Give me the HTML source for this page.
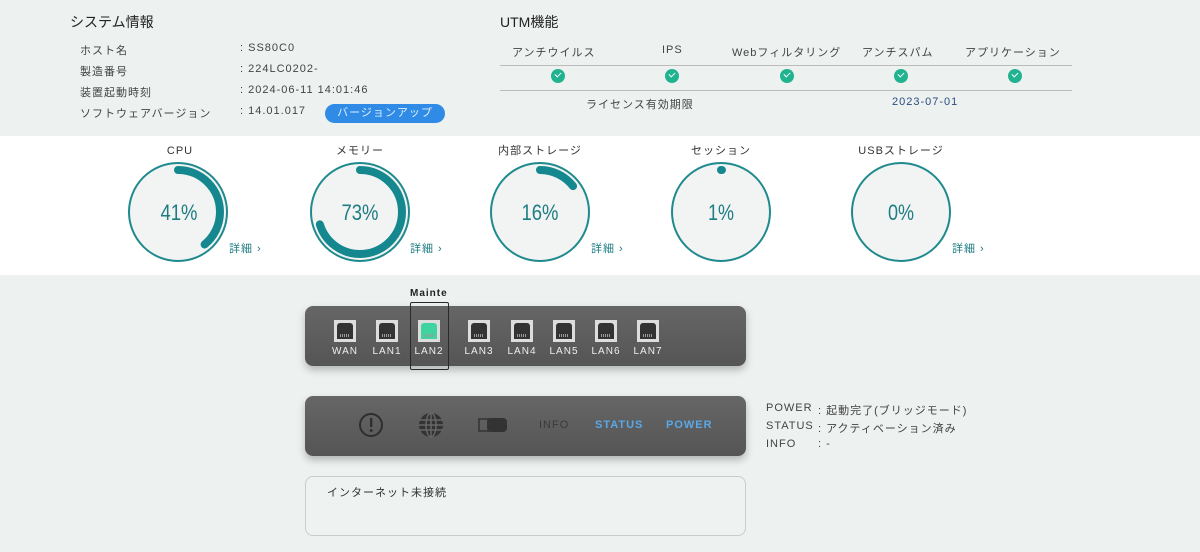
<!DOCTYPE html>
<html><head><meta charset="utf-8"><style>
*{margin:0;padding:0;box-sizing:border-box}
body{width:1200px;height:552px;background:#edf1f0;font-family:"Liberation Sans","Noto Sans CJK JP",sans-serif;color:#333;position:relative;overflow:hidden}
.a{position:absolute;white-space:nowrap}
.t{font-size:14px;color:#222}
.s{font-size:11px;color:#444;letter-spacing:1px}
.band{position:absolute;left:0;top:136px;width:1200px;height:139px;background:#fff}
.hr{position:absolute;height:1px;background:#bbb}
.ck{position:absolute;width:14px;height:14px;border-radius:50%;background:#21b28f}
.ck:after{content:"";position:absolute;left:4px;top:3px;width:5px;height:3px;border-left:1.5px solid #fff;border-bottom:1.5px solid #fff;transform:rotate(-45deg)}
.panel{position:absolute;border-radius:8px;box-shadow:0 4px 8px rgba(0,0,0,.25);background:linear-gradient(#666,#555)}
.port{position:absolute;top:14px;width:22px;height:22px;background:#ddd}
.port i{position:absolute;left:3px;top:3px;width:16px;height:16px;background:#333;border-radius:3px 3px 0 0}
.port i:after{content:"";position:absolute;left:3px;bottom:2px;width:10px;height:3px;background:repeating-linear-gradient(90deg,#999 0 1px,transparent 1px 2px)}
.pl{position:absolute;top:40px;font-size:10px;color:#eee;letter-spacing:1px;width:40px;text-align:center}
.g{position:absolute;font-size:11px;color:#1d7d83;letter-spacing:1px}
</style></head><body>
<div class="a t" style="left:70px;top:12px">システム情報</div>
<div class="a s" style="left:80px;top:42px">ホスト名</div>
<div class="a s" style="left:80px;top:63px">製造番号</div>
<div class="a s" style="left:80px;top:84px">装置起動時刻</div>
<div class="a s" style="left:80px;top:105px">ソフトウェアバージョン</div>
<div class="a s" style="left:240px;top:42px">: SS80C0</div>
<div class="a s" style="left:240px;top:63px">: 224LC0202-</div>
<div class="a s" style="left:240px;top:84px">: 2024-06-11 14:01:46</div>
<div class="a s" style="left:240px;top:105px">: 14.01.017</div>
<div class="a" style="left:325px;top:104px;width:120px;height:19px;border-radius:10px;background:#2f8be6;color:#dfeeff;font-size:11px;text-align:center;line-height:19px;letter-spacing:1px">バージョンアップ</div>

<div class="a t" style="left:500px;top:12px">UTM機能</div>
<div class="a s" style="left:512px;top:44px">アンチウイルス</div>
<div class="a s" style="left:662px;top:44px">IPS</div>
<div class="a s" style="left:732px;top:44px">Webフィルタリング</div>
<div class="a s" style="left:862px;top:44px">アンチスパム</div>
<div class="a s" style="left:965px;top:44px">アプリケーション</div>
<div class="hr" style="left:500px;top:65px;width:572px"></div>
<div class="ck" style="left:551px;top:69px"></div>
<div class="ck" style="left:665px;top:69px"></div>
<div class="ck" style="left:780px;top:69px"></div>
<div class="ck" style="left:894px;top:69px"></div>
<div class="ck" style="left:1008px;top:69px"></div>
<div class="hr" style="left:500px;top:90px;width:572px"></div>
<div class="a s" style="left:586px;top:96px">ライセンス有効期限</div>
<div class="a s" style="left:892px;top:96px;color:#2a4c80">2023-07-01</div>

<div class="band"></div>
<svg class="a" style="left:0;top:136px" width="1200" height="139">
<g font-family="Liberation Sans,Noto Sans CJK JP,sans-serif" font-size="11" fill="#333" text-anchor="middle" letter-spacing="1">
<text x="180" y="18">CPU</text><text x="360" y="18">メモリー</text><text x="540" y="18">内部ストレージ</text><text x="721" y="18">セッション</text><text x="901" y="18">USBストレージ</text>
</g>
<g fill="#f2f3f3" stroke="#1f8a8e" stroke-width="2">
<circle cx="178" cy="76" r="49"/><circle cx="360" cy="76" r="49"/><circle cx="540" cy="76" r="49"/><circle cx="721" cy="76" r="49"/><circle cx="901" cy="76" r="49"/>
</g>
<g fill="none" stroke="#14888e" stroke-width="8" stroke-linecap="round">
<circle cx="178" cy="76" r="42" stroke-dasharray="103 300" transform="rotate(-90 178 76)"/>
<circle cx="360" cy="76" r="42" stroke-dasharray="185 300" transform="rotate(-90 360 76)"/>
<circle cx="540" cy="76" r="42" stroke-dasharray="38 300" transform="rotate(-90 540 76)"/>
<circle cx="721" cy="76" r="42" stroke-dasharray="1 300" transform="rotate(-90 721 76)"/>
</g>
<g font-family="Liberation Sans,sans-serif" font-size="22" fill="#1d7d83" text-anchor="middle">
<text x="179" y="84" textLength="37" lengthAdjust="spacingAndGlyphs">41%</text><text x="360" y="84" textLength="37" lengthAdjust="spacingAndGlyphs">73%</text><text x="540" y="84" textLength="37" lengthAdjust="spacingAndGlyphs">16%</text><text x="721" y="84" textLength="26" lengthAdjust="spacingAndGlyphs">1%</text><text x="901" y="84" textLength="26" lengthAdjust="spacingAndGlyphs">0%</text>
</g>
</svg>
<div class="g" style="left:229px;top:240px">詳細 ›</div>
<div class="g" style="left:410px;top:240px">詳細 ›</div>
<div class="g" style="left:591px;top:240px">詳細 ›</div>
<div class="g" style="left:952px;top:240px">詳細 ›</div>

<div class="a" style="left:410px;top:288px;font-size:10px;font-weight:bold;letter-spacing:1px;color:#222">Mainte</div>
<div class="panel" style="left:305px;top:306px;width:441px;height:60px">
<div class="port" style="left:29px"><i></i></div><div class="pl" style="left:20px">WAN</div>
<div class="port" style="left:71px"><i></i></div><div class="pl" style="left:62px">LAN1</div>
<div class="port" style="left:113px"><i style="background:#3fd3a0"></i></div><div class="pl" style="left:104px">LAN2</div>
<div class="port" style="left:163px"><i></i></div><div class="pl" style="left:154px">LAN3</div>
<div class="port" style="left:206px"><i></i></div><div class="pl" style="left:197px">LAN4</div>
<div class="port" style="left:248px"><i></i></div><div class="pl" style="left:239px">LAN5</div>
<div class="port" style="left:290px"><i></i></div><div class="pl" style="left:281px">LAN6</div>
<div class="port" style="left:332px"><i></i></div><div class="pl" style="left:323px">LAN7</div>
</div>
<div class="a" style="left:410px;top:302px;width:39px;height:68px;border:1.5px solid #2a2a2a;border-radius:2px"></div>

<div class="panel" style="left:305px;top:396px;width:441px;height:60px">
<svg class="a" style="left:52px;top:15px" width="160" height="30">
<circle cx="14" cy="14" r="11" fill="none" stroke="#2e2e2e" stroke-width="2"/>
<rect x="13" y="7" width="2.4" height="9" fill="#2e2e2e"/><circle cx="14.2" cy="19.5" r="1.5" fill="#2e2e2e"/>
<circle cx="74" cy="14" r="12" fill="#333"/>
<g stroke="#666" stroke-width="1.5" fill="none"><line x1="62" y1="9" x2="86" y2="9"/><line x1="62" y1="14" x2="86" y2="14"/><line x1="62" y1="19" x2="86" y2="19"/><ellipse cx="74" cy="14" rx="5" ry="12"/><line x1="74" y1="2" x2="74" y2="26"/></g>
<rect x="122" y="8" width="10" height="12" fill="none" stroke="#333" stroke-width="1.5"/><rect x="130" y="7" width="20" height="14" rx="4" fill="#333"/>
</svg>
<div class="a" style="left:234px;top:23px;font-size:11px;color:#3a3a3a;letter-spacing:1px">INFO</div>
<div class="a" style="left:290px;top:23px;font-size:11px;color:#5aa8e6;font-weight:bold;letter-spacing:1px">STATUS</div>
<div class="a" style="left:361px;top:23px;font-size:11px;color:#5aa8e6;font-weight:bold;letter-spacing:1px">POWER</div>
</div>
<div class="a s" style="left:766px;top:402px">POWER</div><div class="a s" style="left:818px;top:402px">: 起動完了(ブリッジモード)</div>
<div class="a s" style="left:766px;top:420px">STATUS</div><div class="a s" style="left:818px;top:420px">: アクティベーション済み</div>
<div class="a s" style="left:766px;top:438px">INFO</div><div class="a s" style="left:818px;top:438px">: -</div>

<div class="a" style="left:305px;top:476px;width:441px;height:60px;border:1px solid #c8cccc;border-radius:8px;background:#eef2f1"></div>
<div class="a s" style="left:327px;top:484px;color:#333">インターネット未接続</div>
</body></html>
